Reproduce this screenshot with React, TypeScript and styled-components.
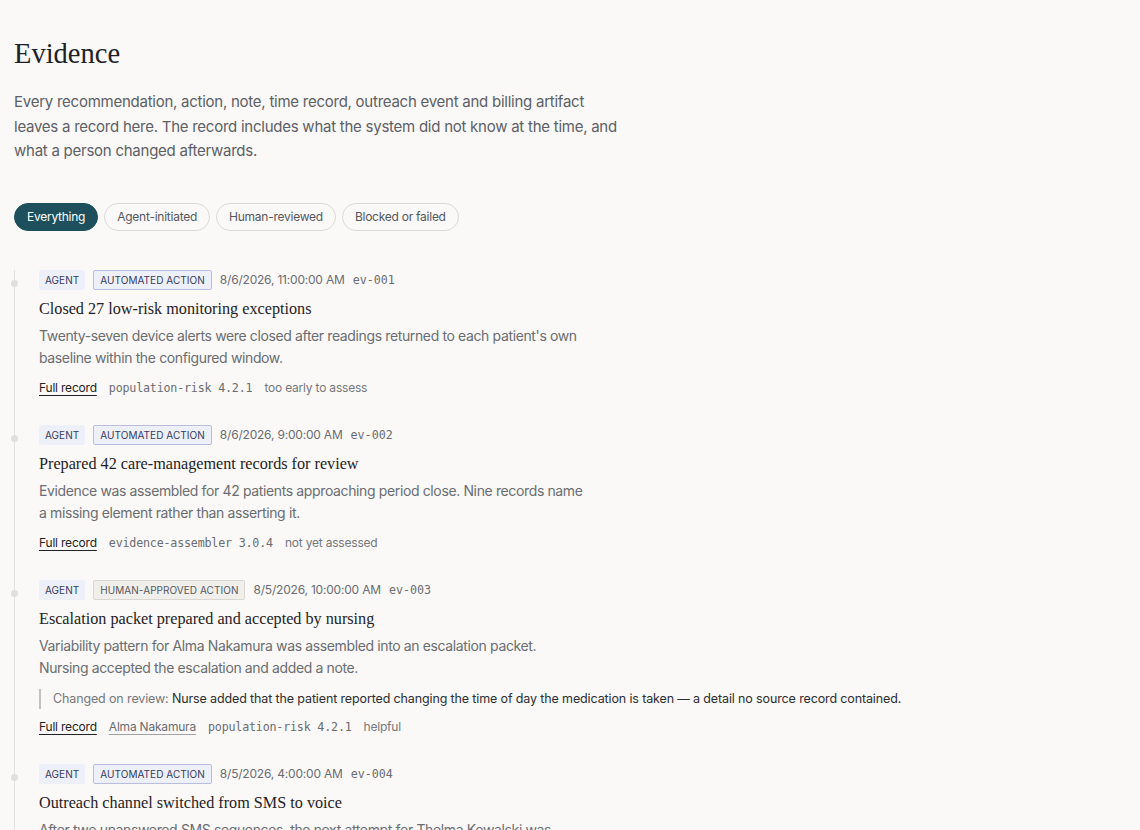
import React from "react";
import styled, { createGlobalStyle } from "styled-components";

const Global = createGlobalStyle`
  html, body { margin: 0; padding: 0; background: #faf9f7; }
  body { font-family: Inter, "Noto Sans", sans-serif; color: #222; }
`;

const Page = styled.main`
  padding: 34px 14px 0 14px;
  background: #faf9f7;
  min-height: 830px;
  box-sizing: border-box;
`;

const Title = styled.h1`
  font-family: "Liberation Serif", "DejaVu Serif", serif;
  font-weight: 400;
  font-size: 28.5px;
  line-height: 40px;
  margin: 0 0 16px 0;
  color: #1f2226;
`;

const Lead = styled.p`
  font-size: 15px;
  letter-spacing: -0.25px;
  line-height: 24.5px;
  color: #5d6066;
  margin: 0 0 39px 0;
  max-width: 610px;
`;

const Filters = styled.div`
  display: flex;
  gap: 6px;
  margin-bottom: 39px;
`;

const Chip = styled.button<{ $active?: boolean }>`
  font-family: inherit;
  font-size: 12px;
  letter-spacing: -0.25px;
  height: 28px;
  padding: 0 12px;
  border-radius: 14px;
  border: 1px solid ${(p) => (p.$active ? "#1d505c" : "#dcdad6")};
  background: ${(p) => (p.$active ? "#1d505c" : "transparent")};
  color: ${(p) => (p.$active ? "#ffffff" : "#55585e")};
  cursor: pointer;
`;

const Timeline = styled.ol`
  list-style: none;
  margin: 0;
  padding: 0 0 0 24px;
  border-left: 1px solid #e4e2de;
  display: flex;
  flex-direction: column;
  gap: 27px;
`;

const Item = styled.li`
  position: relative;
`;

const Dot = styled.span`
  position: absolute;
  left: -28px;
  top: 10px;
  width: 7px;
  height: 7px;
  border-radius: 50%;
  background: #e1dfdb;
`;

const Meta = styled.div`
  display: flex;
  align-items: center;
  gap: 8px;
  height: 20px;
`;

const Badge = styled.span<{ $kind: "agent" | "auto" | "human" }>`
  display: inline-flex;
  align-items: center;
  box-sizing: border-box;
  height: 20px;
  padding: 0 6px;
  font-size: 10px;
  letter-spacing: 0.05px;
  text-transform: uppercase;
  border-radius: 2px;
  color: ${(p) => (p.$kind === "human" ? "#56585c" : "#363a5e")};
  background: ${(p) => (p.$kind === "human" ? "#f0efec" : "#eef0f9")};
  border: ${(p) =>
    p.$kind === "agent" ? "none" : p.$kind === "auto" ? "1px solid #b9bedf" : "1px solid #d9d7d2"};
`;

const When = styled.span`
  font-size: 12px;
  letter-spacing: -0.2px;
  color: #6a6d72;
`;

const Mono = styled.span`
  font-family: "DejaVu Sans Mono", "Liberation Mono", monospace;
  font-size: 11.7px;
  color: #6a6d72;
`;

const ItemTitle = styled.h3`
  font-family: "Liberation Serif", "DejaVu Serif", serif;
  font-weight: 400;
  font-size: 16.2px;
  line-height: 22px;
  margin: 8px 0 5px 0;
  color: #1f2226;
`;

const Desc = styled.p`
  font-size: 14px;
  letter-spacing: -0.37px;
  line-height: 22.5px;
  color: #6a6d72;
  margin: 0;
  max-width: 620px;
`;

const Change = styled.div`
  margin-top: 9px;
  border-left: 2px solid #c4c2be;
  padding-left: 12px;
  font-size: 12.5px;
  letter-spacing: -0.13px;
  line-height: 20px;
  color: #2b2e33;
`;

const ChangeLabel = styled.span`
  color: #75787d;
`;

const Footer = styled.div`
  display: flex;
  align-items: center;
  gap: 12px;
  margin-top: 8px;
  font-size: 12px;
  letter-spacing: -0.2px;
  line-height: 20px;
`;

const Link = styled.a<{ $muted?: boolean }>`
  color: ${(p) => (p.$muted ? "#6a6d72" : "#1f2226")};
  text-decoration: underline;
  text-decoration-color: ${(p) => (p.$muted ? "#a0a2a6" : "#1f2226")};
  text-underline-offset: 3px;
  cursor: pointer;
`;

const Outcome = styled.span`
  color: #75787d;
`;

type Ev = {
  id: string;
  kind: "auto" | "human";
  when: string;
  title: string;
  desc: string[];
  change?: string;
  patient?: string;
  model: string;
  outcome: string;
};

const events: Ev[] = [
  {
    id: "ev-001",
    kind: "auto",
    when: "8/6/2026, 11:00:00 AM",
    title: "Closed 27 low-risk monitoring exceptions",
    desc: [
      "Twenty-seven device alerts were closed after readings returned to each patient's own",
      "baseline within the configured window.",
    ],
    model: "population-risk 4.2.1",
    outcome: "too early to assess",
  },
  {
    id: "ev-002",
    kind: "auto",
    when: "8/6/2026, 9:00:00 AM",
    title: "Prepared 42 care-management records for review",
    desc: [
      "Evidence was assembled for 42 patients approaching period close. Nine records name",
      "a missing element rather than asserting it.",
    ],
    model: "evidence-assembler 3.0.4",
    outcome: "not yet assessed",
  },
  {
    id: "ev-003",
    kind: "human",
    when: "8/5/2026, 10:00:00 AM",
    title: "Escalation packet prepared and accepted by nursing",
    desc: [
      "Variability pattern for Alma Nakamura was assembled into an escalation packet.",
      "Nursing accepted the escalation and added a note.",
    ],
    change:
      "Nurse added that the patient reported changing the time of day the medication is taken — a detail no source record contained.",
    patient: "Alma Nakamura",
    model: "population-risk 4.2.1",
    outcome: "helpful",
  },
  {
    id: "ev-004",
    kind: "auto",
    when: "8/5/2026, 4:00:00 AM",
    title: "Outreach channel switched from SMS to voice",
    desc: [
      "After two unanswered SMS sequences, the next attempt for Thelma Kowalski was",
      "moved to a voice call during the patient's stated preferred hours.",
    ],
    model: "outreach-planner 2.1.0",
    outcome: "not yet assessed",
  },
];

export default function App() {
  return (
    <>
      <Global />
      <Page>
        <Title>Evidence</Title>
        <Lead>
          Every recommendation, action, note, time record, outreach event and billing artifact
          leaves a record here. The record includes what the system did not know at the time, and
          what a person changed afterwards.
        </Lead>
        <Filters>
          <Chip $active>Everything</Chip>
          <Chip>Agent-initiated</Chip>
          <Chip>Human-reviewed</Chip>
          <Chip>Blocked or failed</Chip>
        </Filters>
        <Timeline>
          {events.map((e) => (
            <Item key={e.id}>
              <Dot />
              <Meta>
                <Badge $kind="agent">Agent</Badge>
                <Badge $kind={e.kind}>
                  {e.kind === "auto" ? "Automated action" : "Human-approved action"}
                </Badge>
                <When>{e.when}</When>
                <Mono>{e.id}</Mono>
              </Meta>
              <ItemTitle>{e.title}</ItemTitle>
              <Desc>
                {e.desc[0]}
                <br />
                {e.desc[1]}
              </Desc>
              {e.change && (
                <Change>
                  <ChangeLabel>Changed on review: </ChangeLabel>
                  {e.change}
                </Change>
              )}
              <Footer>
                <Link>Full record</Link>
                {e.patient && <Link $muted>{e.patient}</Link>}
                <Mono>{e.model}</Mono>
                <Outcome>{e.outcome}</Outcome>
              </Footer>
            </Item>
          ))}
        </Timeline>
      </Page>
    </>
  );
}
